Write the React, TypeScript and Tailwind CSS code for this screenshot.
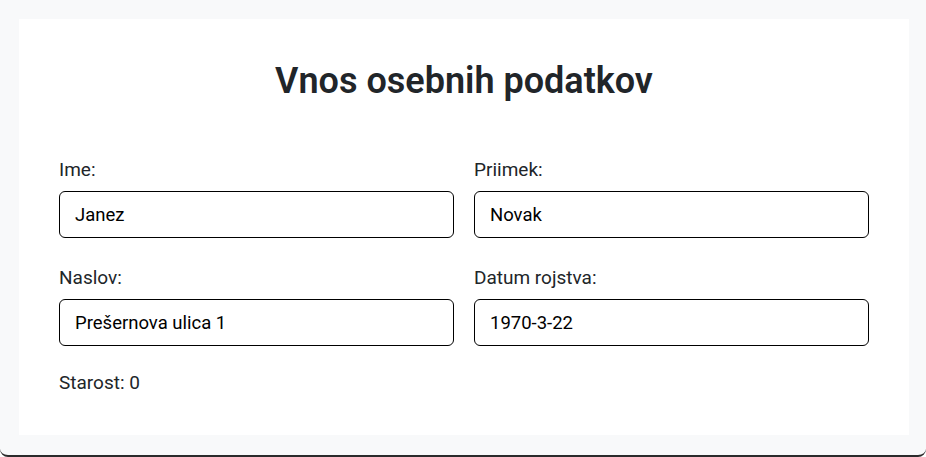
import React, { useState } from "react";

interface Field {
  id: string;
  label: string;
  value: string;
}

const fields: Field[] = [
  { id: "ime", label: "Ime:", value: "Janez" },
  { id: "priimek", label: "Priimek:", value: "Novak" },
  { id: "naslov", label: "Naslov:", value: "Prešernova ulica 1" },
  { id: "datum", label: "Datum rojstva:", value: "1970-3-22" },
];

const App: React.FC = () => {
  const [values, setValues] = useState<Record<string, string>>(
    Object.fromEntries(fields.map((f) => [f.id, f.value]))
  );

  return (
    <div
      className="h-[457px] bg-[#f8f9fa] pt-[19px] pl-[19px] pr-[17px] border-b-2 border-[#2b2b2b] rounded-b-lg text-[#212529]"
      style={{ fontFamily: 'Roboto, "Noto Sans", sans-serif' }}
    >
      <div className="bg-white h-[416px] px-10 pt-[41px]">
        <h1 className="text-center text-[36px] font-semibold leading-[1.2] mb-[53px]">
          Vnos osebnih podatkov
        </h1>

        <div className="grid grid-cols-2 gap-x-5 gap-y-[26px]">
          {fields.map((field) => (
            <div key={field.id} className="flex flex-col">
              <label htmlFor={field.id} className="text-[19px] leading-[27px] mb-[8px]">
                {field.label}
              </label>
              <input
                id={field.id}
                type="text"
                value={values[field.id]}
                onChange={(e) => setValues({ ...values, [field.id]: e.target.value })}
                className="h-[47px] border border-black rounded-md pl-[15px] pr-4 text-[18.5px] text-black outline-none"
              />
            </div>
          ))}
        </div>

        <p className="text-[19px] leading-[27px] mt-[23px]">Starost: 0</p>
      </div>
    </div>
  );
};

export default App;
